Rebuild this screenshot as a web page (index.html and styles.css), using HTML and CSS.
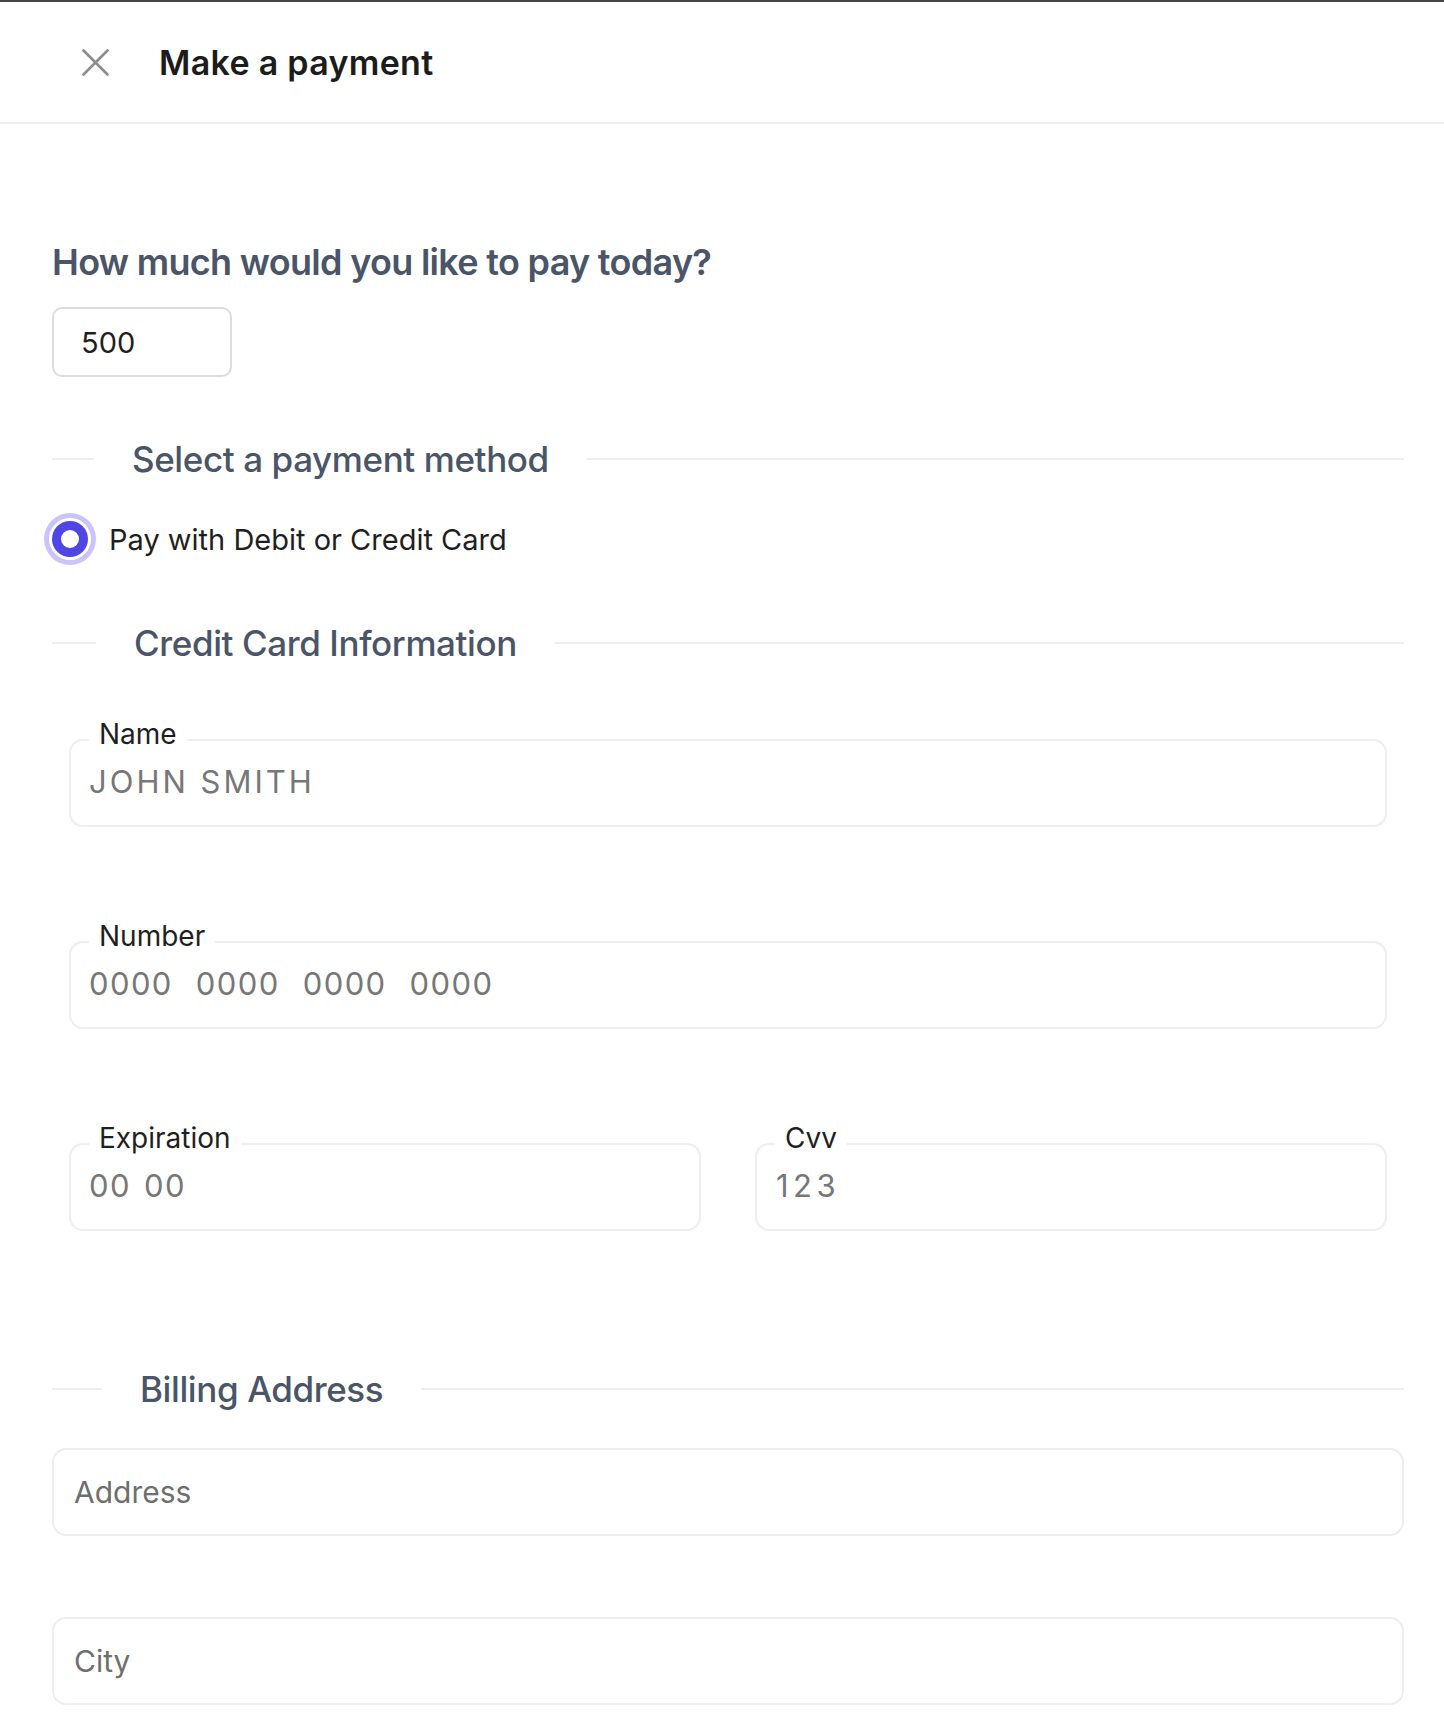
FILE: index.html
```
<!DOCTYPE html>
<html lang="en">
<head>
<meta charset="utf-8">
<title>Make a payment</title>
<link rel="stylesheet" href="styles.css">
</head>
<body>
<header class="header">
  <button class="close" type="button" aria-label="Close">
    <svg width="27" height="27" viewBox="0 0 27 27" aria-hidden="true"><path d="M1.5 1.5 L25.5 25.5 M25.5 1.5 L1.5 25.5" stroke="#8c8c8c" stroke-width="2.6" stroke-linecap="round" fill="none"/></svg>
  </button>
  <h1 class="title">Make a payment</h1>
</header>
<main class="main">
  <h2 class="question">How much would you like to pay today?</h2>
  <input class="amount" type="text" value="500">

  <div class="divider divider-method"><span class="divider-text">Select a payment method</span></div>

  <label class="radio-row">
    <input class="radio" type="radio" name="method" checked>
    <span class="radio-label">Pay with Debit or Credit Card</span>
  </label>

  <div class="divider divider-card"><span class="divider-text">Credit Card Information</span></div>

  <fieldset class="card-field field-name">
    <legend>Name</legend>
    <input class="card-input" type="text" placeholder="JOHN SMITH">
  </fieldset>

  <fieldset class="card-field field-number">
    <legend>Number</legend>
    <input class="card-input card-input-digits card-input-number" type="text" placeholder="0000&nbsp; 0000&nbsp; 0000&nbsp; 0000">
  </fieldset>

  <div class="card-row">
    <fieldset class="card-field">
      <legend>Expiration</legend>
      <input class="card-input card-input-digits" type="text" placeholder="00 00">
    </fieldset>
    <fieldset class="card-field">
      <legend>Cvv</legend>
      <input class="card-input card-input-cvv" type="text" placeholder="123">
    </fieldset>
  </div>

  <div class="divider divider-billing"><span class="divider-text">Billing Address</span></div>

  <input class="address-input address" type="text" placeholder="Address">
  <input class="address-input city" type="text" placeholder="City">
</main>
</body>
</html>
```
FILE: styles.css
```
* { box-sizing: border-box; }

html, body {
  margin: 0;
  padding: 0;
  background: #ffffff;
}

body {
  font-family: Inter, "Noto Sans", sans-serif;
  color: #1f1f1f;
  border-top: 2px solid #444444;
  height: 1716px;
  overflow: hidden;
}

.header {
  height: 122px;
  border-bottom: 2px solid #eeeeee;
  display: flex;
  align-items: center;
  padding-left: 82px;
}

.close {
  width: 27px;
  height: 27px;
  padding: 0;
  border: 0;
  background: none;
  display: flex;
  margin-right: 50px;
}

.title {
  margin: 0;
  font-size: 34px;
  font-weight: 600;
  color: #1c1c1c;
  letter-spacing: 0.3px;
}

.main {
  display: flex;
  flex-direction: column;
  align-items: stretch;
  padding: 116px 40px 0 52px;
}

.question {
  margin: 0;
  font-size: 36px;
  font-weight: 600;
  color: #4a5568;
  letter-spacing: -0.7px;
}

.amount {
  margin-top: 23px;
  width: 180px;
  height: 70px;
  border: 2px solid #dcdcdc;
  border-radius: 10px;
  padding: 0 0 0 27px;
  font-family: inherit;
  font-size: 29px;
  color: #1f1f1f;
  outline: none;
}

.divider {
  display: flex;
  align-items: center;
  gap: 38px;
  font-size: 35px;
  font-weight: 500;
  color: #4a5568;
  letter-spacing: -0.4px;
}

.divider::before,
.divider::after {
  content: "";
  height: 2px;
  background: #eeeeee;
}

.divider::before { width: 42px; }
.divider::after { flex: 1; }

.divider-method { margin-top: 61px; }
.divider-card { margin-top: 65px; }
.divider-card::before { width: 44px; }
.divider-billing { margin-top: 137px; }
.divider-billing::before { width: 50px; }

.radio-row {
  margin-top: 41px;
  display: flex;
  align-items: center;
  gap: 21px;
  font-size: 29px;
  color: #1f1f1f;
}

.radio {
  appearance: none;
  -webkit-appearance: none;
  margin: 0;
  width: 36px;
  height: 36px;
  border-radius: 50%;
  background: #4f46e5;
  box-shadow: 0 0 0 3px #ffffff, 0 0 0 8px #cbc4fb;
  display: flex;
  align-items: center;
  justify-content: center;
  flex: none;
}

.radio::after {
  content: "";
  width: 18px;
  height: 18px;
  border-radius: 50%;
  background: #ffffff;
}

.card-field {
  margin: 54px 17px 0;
  padding: 0 18px 23px;
  border: 2px solid #eeeeee;
  border-radius: 14px;
  min-width: 0;
}

.card-field legend {
  padding: 0 10px 10px;
  font-size: 28px;
  color: #1f1f1f;
  line-height: 1.21;
}

.field-number { margin-top: 93px; }

.card-row {
  margin: 93px 17px 0;
  display: grid;
  grid-template-columns: 1fr 1fr;
  gap: 54px;
}

.card-row .card-field { margin: 0; }

.card-input {
  display: block;
  width: 100%;
  height: 40px;
  border: 0;
  padding: 0;
  font-family: inherit;
  font-size: 31px;
  line-height: 40px;
  letter-spacing: 3px;
  color: #1f1f1f;
  outline: none;
  background: transparent;
}

.card-input-digits {
  letter-spacing: 1.4px;
  word-spacing: 3px;
}

.card-input-number { word-spacing: 1.4px; }

.card-input-cvv {
  letter-spacing: 4.5px;
  padding-left: 1px;
}

.card-input::placeholder {
  color: #777777;
  opacity: 1;
}

.address-input {
  height: 88px;
  border: 2px solid #eeeeee;
  border-radius: 14px;
  padding: 0 0 0 20px;
  font-family: inherit;
  font-size: 30px;
  color: #1f1f1f;
  outline: none;
}

.address-input::placeholder {
  color: #6e6e6e;
  opacity: 1;
}

.address { margin-top: 38px; }
.city { margin-top: 81px; }
```
